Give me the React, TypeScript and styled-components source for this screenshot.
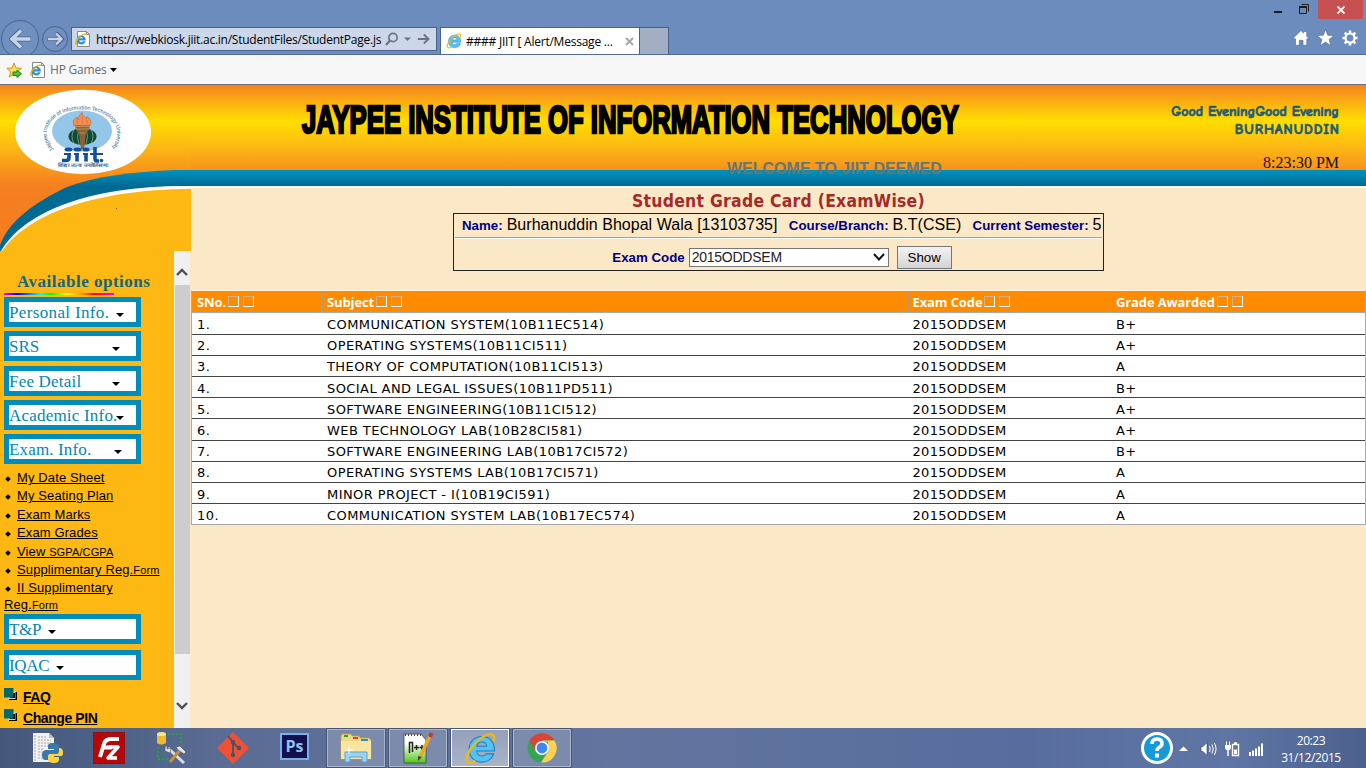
import React from "react";
import styled, { createGlobalStyle, css } from "styled-components";

const GlobalStyle = createGlobalStyle`
  * { box-sizing: border-box; }
  body { margin: 0; overflow: hidden; background: #fbe8c6; font-family: "Liberation Sans", Arial, sans-serif; color: #000; }
`;

const uiFont = `"Open Sans", "Noto Sans", sans-serif`;

const Screen = styled.div`
  width: 1366px;
  height: 768px;
  display: flex;
  flex-direction: column;
  overflow: hidden;
`;

/* ---------- browser frame ---------- */
const Frame = styled.header`
  height: 55px;
  flex: none;
  display: flex;
  align-items: flex-start;
  background: #6b8cbd;
  border-bottom: 1px solid #4f6b96;
`;
const NavButtons = styled.svg`
  flex: none;
  width: 71px;
  height: 54px;
  display: block;
`;
const AddressBar = styled.div`
  width: 366px;
  height: 24px;
  margin-top: 27px;
  padding: 0 6px 0 3px;
  display: flex;
  align-items: center;
  background: #ccd7ea;
  border: 1px solid #48628c;
  font: 12px/22px ${uiFont};
`;
const Url = styled.span`
  margin: 2px 0 0 5px;
  width: 287px;
  white-space: nowrap;
  letter-spacing: -0.25px;
`;
const Tab = styled.div`
  width: 200px;
  height: 27px;
  margin: 27px 0 0 3px;
  padding: 0 5px;
  display: flex;
  align-items: center;
  background: #fff;
  border: 1px solid #48628c;
  border-bottom: 0;
  font: 12px/26px ${uiFont};
`;
const TabTitle = styled.span`
  flex: 1;
  margin: 2px 0 0 4px;
  white-space: nowrap;
  letter-spacing: -0.23px;
`;
const NewTab = styled.div`
  width: 29px;
  height: 27px;
  margin-top: 27px;
  background: #a1aec3;
  border: 1px solid #48628c;
  border-width: 1px 1px 0 0;
`;
const WindowSide = styled.div`
  margin-left: auto;
  display: flex;
  flex-direction: column;
  align-items: flex-end;
`;
const WindowControls = styled.div`
  height: 19px;
  display: flex;
  margin-right: 3px;
`;
const CloseButton = styled.div`
  width: 45px;
  height: 19px;
  background: #c75050;
  display: flex;
  align-items: center;
  justify-content: center;
`;
const FavoritesBar = styled.div`
  height: 30px;
  flex: none;
  display: flex;
  align-items: center;
  gap: 3px;
  padding-left: 6px;
  background: #f7f7f7;
  border-bottom: 1px solid #6d6d72;
  font: 12px/28px ${uiFont};
  color: #6a6a6a;
`;
const FavIcon = styled.svg`
  width: 17px;
  height: 17px;
  margin: 2px 4px 0 0;
`;
const FavLabel = styled.span`
  margin: 1px 0 0 1px;
  letter-spacing: -0.2px;
`;

/* ---------- banner ---------- */
const Banner = styled.div`
  position: relative;
  height: 103px;
  flex: none;
  display: flex;
  padding-left: 191px;
  background: linear-gradient(#f58220 0, #ffde00 36px, #fcb814 62px, #f7901e 85px, #0093c0 85px, #006a93 101px, #fff 101px);
`;
const BannerArt = styled.svg`
  position: absolute;
  left: 0;
  top: 0;
  width: 191px;
  height: 166px;
`;
const BannerCenter = styled.div`
  width: 840px;
  padding-left: 111px;
`;
const Institute = styled.h1`
  margin: 11px 0 0;
  font: bold 38px/48px "Liberation Sans", Arial, sans-serif;
  white-space: nowrap;
  transform: scaleX(0.676);
  transform-origin: 0 50%;
  -webkit-text-stroke: 2.6px #000;
`;
const Welcome = styled.div`
  margin: 16px 0 0 425px;
  font: bold 16px/18px "Liberation Sans", Arial, sans-serif;
  color: #647772;
  white-space: nowrap;
`;
const Greeting = styled.div`
  margin-left: auto;
  padding: 18px 27px 0 0;
  text-align: right;
  font: bold 14px/18px "Comic Sans MS", "Comic Neue", "DejaVu Sans", sans-serif;
  color: #1d5c76;
  white-space: nowrap;
`;
const Salute = styled.div`
  -webkit-text-stroke: 0.7px #1d5c76;
`;
const Student = styled(Salute)`
  letter-spacing: 1px;
  margin-right: -1px;
`;
const Clock = styled.div`
  margin-top: 14px;
  font: 16px/20px "Liberation Serif", "Times New Roman", serif;
  color: #111;
`;

/* ---------- body ---------- */
const Body = styled.div`
  flex: 1;
  min-height: 0;
  display: grid;
  grid-template-columns: 191px 1fr;
`;
const Sidebar = styled.aside`
  min-height: 0;
  display: grid;
  padding-top: 63px;
  grid-template-columns: 174px 17px;
  background: #fdb813;
`;
const Menu = styled.nav`
  min-height: 0;
  overflow: hidden;
  padding: 21px 0 0 4px;
`;
const MenuHeading = styled.div`
  padding-left: 13px;
  height: 21px;
  font: bold 17px/20px "Liberation Serif", Georgia, serif;
  color: #116680;
  letter-spacing: 0.5px;
  white-space: nowrap;
`;
const Rainbow = styled.div`
  width: 110px;
  height: 2px;
  margin-bottom: 2px;
  background: linear-gradient(90deg, #f0f, #00f 12%, #0ff 33%, #0f0 43%, #ff0 58%, #f80 72%, #f00 82%, #f0f);
`;
const MenuGroup = styled.div<{ $gap?: number }>`
  display: flex;
  flex-direction: column;
  gap: ${(p) => p.$gap ?? 4.25}px;
`;
const MenuBox = styled.div<{ $space?: number }>`
  width: 137px;
  height: 30px;
  flex: none;
  padding: 2px 0 0 0;
  display: flex;
  align-items: center;
  background: #fff;
  border: 5px solid #008dbb;
  font: 17px/20px "Liberation Serif", Georgia, serif;
  color: #0088b4;
  white-space: nowrap;
  letter-spacing: ${(p) => p.$space ?? 0}px;
`;
const Caret = styled.i<{ $gap: number }>`
  width: 0;
  height: 0;
  margin: 4px 0 0 ${(p) => p.$gap}px;
  border: 4px solid transparent;
  border-top-color: #000;
  border-bottom: 0;
`;
const Links = styled.ul`
  margin: 5px 0 2px;
  padding: 0;
  list-style: none;
  font-size: 13px;
  line-height: 18.4px;
  letter-spacing: 0.12px;
  small { font-size: 11px; }
`;
const LinkItem = styled.li`
  white-space: nowrap;
  &::before {
    content: "";
    display: inline-block;
    width: 4px;
    height: 4px;
    margin: 0 7px 1px 2px;
    transform: rotate(45deg);
    background: #000;
  }
`;
const Anchor = styled.span`
  text-decoration: underline;
`;
const Wrapped = styled.div`
  line-height: 14px;
`;
const Extras = styled.div`
  padding-top: 7px;
`;
const ExtraLink = styled.div`
  height: 21px;
  display: flex;
  align-items: center;
  gap: 6px;
  font: bold 14px/21px "Liberation Sans", Arial, sans-serif;
  letter-spacing: -0.42px;
  svg { margin-bottom: 5px; }
`;
const Scrollbar = styled.div`
  display: grid;
  grid-template-rows: 34px 369px 1fr;
  background: #f0f0f0;
  border-right: 1px solid #fbe8c6;
`;
const Arrow = styled.svg<{ $top: number }>`
  display: block;
  width: 12px;
  height: 8px;
  margin: ${(p) => p.$top}px auto 0;
`;
const Thumb = styled.div`
  margin-left: 1px;
  background: #cdcdcd;
`;
const Content = styled.main`
  background: #fbe8c6;
  padding-top: 2px;
  display: flex;
  flex-direction: column;
  align-items: center;
`;
const Title = styled.h2`
  margin: 0;
  height: 23px;
  font: bold 17.4px/22px "DejaVu Sans Condensed", "DejaVu Sans", sans-serif;
  letter-spacing: 0.27px;
  color: #a52a2a;
  white-space: nowrap;
`;
const Form = styled.section`
  width: 651px;
  height: 58px;
  border: 1px solid #222;
  padding: 0 1px;
`;
const Facts = styled.div`
  height: 23px;
  padding-left: 7px;
  display: flex;
  align-items: baseline;
  font-size: 16px;
  line-height: 22px;
  white-space: nowrap;
`;
const Label = styled.b`
  color: #000080;
  font-size: 13.3px;
  margin-right: 4px;
`;
const Value = styled.span`
  margin-right: 11.3px;
  letter-spacing: 0.03px;
`;
const Rule = styled.div`
  height: 2px;
  border-top: 1px solid #a0a0a0;
  border-bottom: 1px solid #fff;
`;
const Controls = styled.div`
  padding: 7px 0 0 7px;
  display: flex;
  justify-content: center;
  align-items: center;
`;
const Select = styled.div`
  width: 200px;
  height: 19px;
  display: flex;
  align-items: center;
  justify-content: space-between;
  padding: 0 2px;
  background: #fff;
  border: 1px solid #777;
  font-size: 14px;
  line-height: 17px;
  letter-spacing: -0.25px;
  color: #222;
`;
const Show = styled.div`
  width: 55px;
  height: 23px;
  margin-left: 8px;
  text-align: center;
  font-size: 13.3px;
  line-height: 21px;
  background: linear-gradient(#f2f2f2, #d4d4d4);
  border: 1px solid #777;
`;
const Table = styled.div`
  width: 100%;
  height: 235px;
  margin-top: 19px;
  border: 1px solid #aaa;
  border-top-color: #fff3dc;
  background: #fff;
`;
const columns = css`
  display: grid;
  grid-template-columns: 130px 585.5px 203.5px 1fr;
  align-items: center;
`;
const HeadRow = styled.div`
  ${columns};
  height: 22px;
  background: #ff8c00;
  border-bottom: 1px solid #aaa;
  color: #fff;
  font: bold 13px/21px ${uiFont};
`;
const HeadCell = styled.div`
  height: 21px;
  display: flex;
  align-items: center;
  padding: 1px 0 0 5px;
  white-space: nowrap;
  letter-spacing: -0.12px;
  span { margin-right: 2px; }
  & + & { border-left: 1px solid #b59a72; padding-left: 4px; }
`;
const SortBox = styled.i`
  width: 11px;
  height: 11px;
  margin: 0 4px 1px 0;
  border: 1px solid #fff;
  border-top-color: #c9b18c;
  border-left-color: #c9b18c;
`;
const Row = styled.div`
  ${columns};
  height: 21.2px;
  border-bottom: 1px solid #444;
  font: 13px/20px "DejaVu Sans", Verdana, sans-serif;
  &:nth-child(2) { height: 21.6px; }
  &:last-child { height: 20px; border-bottom: 0; }
`;
const Cell = styled.div`
  padding: 1.6px 0 0 5px;
  white-space: nowrap;
  letter-spacing: 0.42px;
  &:nth-child(3) { letter-spacing: 0.3px; }
`;

/* ---------- taskbar ---------- */
const Taskbar = styled.footer`
  height: 40px;
  flex: none;
  display: flex;
  align-items: center;
  padding-left: 16px;
  background: linear-gradient(90deg, #45577a, #50648a 10%, #5b6c94 16%, #62759f 45%, #586d9d 75%, #5f76a5 90%, #4c608d);
`;
const Pinned = styled.div`
  display: flex;
  padding-right: 1px;
`;
const TaskItem = styled.div<{ $state?: "open" | "active" }>`
  width: ${(p) => (p.$state ? 58 : 62)}px;
  height: 38px;
  margin-right: ${(p) => (p.$state ? 4 : 0)}px;
  display: flex;
  align-items: center;
  justify-content: center;
  ${(p) =>
    p.$state &&
    css`
      background: ${p.$state === "active" ? "linear-gradient(#95a1bb, #a9b3c9)" : "#7c8bab"};
      border: 1px solid ${p.$state === "active" ? "#fff" : "#a9b5cb"};
      outline: 1px solid #455676;
    `}
`;
const Tray = styled.div`
  margin-left: auto;
  width: 226px;
  height: 40px;
  display: flex;
  align-items: center;
`;
const DateTime = styled.div`
  width: 90px;
  padding-top: 1px;
  text-align: center;
  color: #fff;
  font: 12px/17px ${uiFont};
  letter-spacing: -0.4px;
`;

const IeLogo = ({ size }: { size: number }) => (
  <svg width={size} height={size} viewBox="0 0 32 32">
    <path d="M29.500 18.500H12.300c.2 3 2.200 4.800 5 4.800 2 0 3.500-.8 4.200-2.100h7.300c-1.400 4.800-6 8-11.500 8-7.300 0-12.300-5-12.300-12.200S10 4.300 17.300 4.300c7.600 0 12.500 5.400 12.200 14.200zM12.400 13.800h9.600c-.3-2.500-2.100-4.100-4.700-4.100s-4.500 1.600-4.900 4.100z" fill="#55c3f2" stroke="#1c7fc0" strokeWidth="1" />
    <path d="M28.500 9c1.300-3.500.8-6-1.500-6.700C22.500.8 12.500 7.500 6.500 16.500c-5 7.500-5.600 12.900-1.500 13.300 2 .2 4-.5 6-2" fill="none" stroke="#f2b90c" strokeWidth="2.300" />
  </svg>
);

const PageIcon = () => (
  <svg width="16" height="16" viewBox="0 0 16 16">
    <path d="M2.500.5h9l3 3v12h-12z" fill="#fff" stroke="#888" />
    <path d="M11.500.5v3h3" fill="none" stroke="#888" />
    <path d="M10.500 9.200H4c.3 2.400 3.200 2.800 4 1.200h2.300c-1 4.300-8.300 3.500-8.300-1.500 0-5.800 8.700-5.800 8.500.3zM4.200 7.500h4C8 5.400 4.600 5.400 4.200 7.500z" fill="#2a8fd8" stroke="#2a8fd8" strokeWidth=".5" />
    <path d="M11 4C10.500 2 6 3.500 3 7.500S.3 13.500 2.300 13" fill="none" stroke="#e8b011" strokeWidth="1.300" />
  </svg>
);

const Emblem = () => (
  <g>
    <ellipse cx="83" cy="47" rx="68" ry="42.300" fill="#fff" />
    <ellipse cx="82" cy="46" rx="30" ry="20.500" fill="#94c6e8" />
    <path id="ring" d="M54 64.500C37 47 51 24.500 82 24.500S127 47 110 64.500" fill="none" />
    <text fontSize="5.600" fill="#2d6482" fontFamily="Liberation Sans" textLength="128">
      <textPath href="#ring" textLength="128">Jaypee Institute of Information Technology University</textPath>
    </text>
    <ellipse cx="82.500" cy="51.500" rx="14" ry="8.500" fill="#124b35" />
    <path d="M74 44.500q-4 7 0 14M79 43.500q-3 8 0 16M86 43.500q3 8 0 16M91 44.500q4 7 0 14" fill="none" stroke="#8fb9a5" strokeWidth=".7" />
    <path d="M75 40h15l-1 5-3 3-2 16h-3l-2-16-3-3z" fill="#8b6337" />
    <path d="M75 41.500h15M76 44h13M80 48h5" stroke="#d3a56b" strokeWidth=".7" />
    <path d="M74 40.500c-2-4 0-7 3-8 0 2 1 2 1 2 0-3 2-5 4-7 0 3 3 4 4 6l1-2c4 3 5 6 3 9z" fill="#f58f55" stroke="#9f5635" strokeWidth=".5" />
    <path d="M77 39q0-3 2-5M82 39q2-4 0-8M87 39q1-3-1-5" fill="none" stroke="#c96437" strokeWidth=".6" />
    <g fill="none" stroke="#124f9f" strokeWidth="3.600">
      <path d="M62 75.500h4q3 0 3-3v-4M77 68.500v8M86 68.500v8M95 62v11.500q0 2.500 3 2.500h1" />
      <path d="M64 69h7M74 69h5M83 69h5M90 69h13" strokeWidth="1.800" />
    </g>
    <g fill="#124f9f">
      <ellipse cx="68.500" cy="64.500" rx="4" ry="2" />
      <ellipse cx="77.500" cy="64.500" rx="4" ry="2" />
      <ellipse cx="86" cy="64.500" rx="3.500" ry="2" />
      <circle cx="101.500" cy="75.500" r="1.800" />
    </g>
    <text x="58" y="82" fontSize="5" fontWeight="bold" fill="#356e8c" textLength="50" lengthAdjust="spacingAndGlyphs">विद्या तत्व ज्योतिसमः</text>
  </g>
);

const menus: [string, number, number][] = [
  ["Personal Info.", 0.35, 7],
  ["SRS", 0, 73],
  ["Fee Detail", 0.2, 30.5],
  ["Academic Info.", 0.2, -2],
  ["Exam. Info.", 0.15, 23],
];
const links: [string, string?][] = [
  ["My Date Sheet"],
  ["My Seating Plan"],
  ["Exam Marks"],
  ["Exam Grades"],
  ["View ", "SGPA/CGPA"],
  ["Supplimentary Reg.", "Form"],
];
const grades = [
  ["COMMUNICATION SYSTEM(10B11EC514)", "B+"],
  ["OPERATING SYSTEMS(10B11CI511)", "A+"],
  ["THEORY OF COMPUTATION(10B11CI513)", "A"],
  ["SOCIAL AND LEGAL ISSUES(10B11PD511)", "B+"],
  ["SOFTWARE ENGINEERING(10B11CI512)", "A+"],
  ["WEB TECHNOLOGY LAB(10B28CI581)", "A+"],
  ["SOFTWARE ENGINEERING LAB(10B17CI572)", "B+"],
  ["OPERATING SYSTEMS LAB(10B17CI571)", "A"],
  ["MINOR PROJECT - I(10B19CI591)", "A"],
  ["COMMUNICATION SYSTEM LAB(10B17EC574)", "A"],
];

const Squares = () => (
  <svg width="13" height="13" viewBox="0 0 13 13">
    <path d="M5 4h8v8H5z" fill="#000" />
    <path d="M4 3h7.500v8H4z" fill="#cfd8c8" />
    <path d="M6 5h5v5H6z" fill="#000" />
    <path d="M0 0h9.500v9.500H0z" fill="#006b68" />
  </svg>
);

export default function App() {
  return (
    <Screen>
      <GlobalStyle />
      <Frame>
        <NavButtons viewBox="0 0 71 54">
          <g fill="#7090c0" stroke="#48628c">
            <circle cx="20" cy="39" r="18.500" />
            <circle cx="55" cy="39" r="12.500" />
          </g>
          <g fill="none" stroke="#48628c" strokeWidth="5">
            <path d="M31 39H12M21 30l-9 9 9 9" />
            <path d="M47.500 39h13M56 33l6 6-6 6" strokeWidth="4" />
          </g>
          <g fill="none" stroke="#c6d3e8">
            <path d="M30.500 39H12M21 30.500L12 39l9 8.500" strokeWidth="3.500" />
            <path d="M48 39h13M56 33.500l5.500 5.500-5.500 5.500" strokeWidth="2.400" />
          </g>
        </NavButtons>
        <AddressBar>
          <PageIcon />
          <Url>https://webkiosk.jiit.ac.in/StudentFiles/StudentPage.js</Url>
          <svg width="48" height="16" viewBox="0 0 48 16" fill="none" stroke="#6c7480">
            <circle cx="11" cy="6.500" r="4.200" strokeWidth="1.700" />
            <path d="M8 9.500l-4 4.500" strokeWidth="2.200" />
            <path d="M22 6.500h7l-3.500 3.500z" fill="#6c7480" stroke="none" />
            <path d="M36 8h10M42 3.500L46.500 8 42 12.500" strokeWidth="2" />
          </svg>
        </AddressBar>
        <Tab>
          <IeLogo size={16} />
          <TabTitle>#### JIIT [ Alert/Message ...</TabTitle>
          <svg width="9" height="9" viewBox="0 0 9 9">
            <path d="M1 1l7 7M8 1L1 8" stroke="#a6a6a6" strokeWidth="2" />
          </svg>
        </Tab>
        <NewTab />
        <WindowSide>
          <WindowControls>
            <svg width="48" height="19" viewBox="0 0 48 19">
              <path d="M4 11h8v2H4z" fill="#1e1e1e" />
              <path d="M29.500 6.500h7v7h-7zM31.500 4.500h7v7" fill="none" stroke="#1e1e1e" />
              <path d="M29 6h8v2h-8z" fill="#1e1e1e" />
            </svg>
            <CloseButton>
              <svg width="8" height="8" viewBox="0 0 8 8">
                <path d="M.5.5l7 7M7.500.5l-7 7" stroke="#fff" strokeWidth="1.800" />
              </svg>
            </CloseButton>
          </WindowControls>
          <svg width="76" height="35" viewBox="0 0 76 35">
            <g fill="#fff" stroke="#4d6790" strokeWidth=".6">
              <path d="M11 11.500l2.700 2.700V12.500h3v4.700l2.600 2.600h-2.500v6.500h-3.800v-5H9.300v5H5.500v-6.500H2.700z" />
              <path d="M35.500 10.500l2.200 5.800 6.400.2-5 3.900 1.800 6.300-5.400-3.600-5.400 3.600 1.800-6.300-5-3.900 6.400-.2z" />
            </g>
            <circle cx="60" cy="19" r="4.500" fill="none" stroke="#fff" strokeWidth="2.200" />
            <g stroke="#fff" strokeWidth="2.600">
              <path d="M60 11.500v3M60 23.500v3M52.500 19h3M64.500 19h3M54.700 13.700l2 2M63.300 22.300l2 2M65.300 13.700l-2 2M56.700 22.300l-2 2" />
            </g>
          </svg>
        </WindowSide>
      </Frame>
      <FavoritesBar>
        <FavIcon viewBox="0 0 17 17">
          <path d="M8 1l2 5 5.500.3-4.300 3.500 1.500 5.200L8 12l-4.700 3 1.500-5.200L.8 6.300 6 6z" fill="#ffdc5e" stroke="#c99a1b" />
          <path d="M7 10h4V8l4.500 3.800L11 15.500v-2H7z" fill="#4fc62d" stroke="#16851a" />
        </FavIcon>
        <PageIcon />
        <FavLabel>HP Games</FavLabel>
        <svg width="7" height="4" viewBox="0 0 7 4"><path d="M0 0h7L3.500 4z" /></svg>
      </FavoritesBar>

      <Banner>
        <BannerCenter>
          <Institute>JAYPEE INSTITUTE OF INFORMATION TECHNOLOGY</Institute>
          <Welcome>WELCOME TO JIIT DEEMED</Welcome>
        </BannerCenter>
        <Greeting>
          <Salute>Good EveningGood Evening</Salute>
          <Student>BURHANUDDIN</Student>
          <Clock>8:23:30 PM</Clock>
        </Greeting>
        <BannerArt viewBox="0 0 191 166">
          <defs>
            <linearGradient id="sky" x1="0" y1="0" x2="0" y2="1">
              <stop offset="0" stopColor="#f58220" />
              <stop offset=".217" stopColor="#ffde00" />
              <stop offset=".373" stopColor="#fcb814" />
              <stop offset=".6" stopColor="#f58020" />
              <stop offset="1" stopColor="#f47b20" />
            </linearGradient>
            <linearGradient id="sea" x1="0" y1="85" x2="0" y2="104" gradientUnits="userSpaceOnUse">
              <stop offset="0" stopColor="#0093c0" />
              <stop offset=".85" stopColor="#006a93" />
            </linearGradient>
          </defs>
          <path d="M0 0h191v166H0z" fill="url(#sky)" />
          <path d="M0 166V160C8 138 31 119 67 102 96 91 132 87 175 85h16v81z" fill="url(#sea)" />
          <path d="M1 166C22 130 80 103 175 101h16v65z" fill="#fff" />
          <path d="M2 166C27 131 88 105 191 103.800V166z" fill="#fdb813" />
          <circle cx="116.500" cy="123.500" r=".6" fill="#6b4a10" />
          <Emblem />
        </BannerArt>
      </Banner>

      <Body>
        <Sidebar>
          <Menu>
            <MenuHeading>Available options</MenuHeading>
            <Rainbow />
            <MenuGroup>
              {menus.map(([label, space, gap]) => (
                <MenuBox key={label} $space={space}>
                  {label}
                  <Caret $gap={gap} />
                </MenuBox>
              ))}
            </MenuGroup>
            <Links>
              {links.map(([text, small]) => (
                <LinkItem key={text}>
                  <Anchor>
                    {text}
                    {small && <small>{small}</small>}
                  </Anchor>
                </LinkItem>
              ))}
              <LinkItem>
                <Anchor>II Supplimentary</Anchor>
                <Wrapped>
                  <Anchor>
                    Reg.<small>Form</small>
                  </Anchor>
                </Wrapped>
              </LinkItem>
            </Links>
            <MenuGroup $gap={6}>
              <MenuBox $space={-0.3}>
                T&amp;P
                <Caret $gap={7} />
              </MenuBox>
              <MenuBox $space={-0.3}>
                IQAC
                <Caret $gap={7} />
              </MenuBox>
            </MenuGroup>
            <Extras>
              <ExtraLink><Squares /><Anchor>FAQ</Anchor></ExtraLink>
              <ExtraLink><Squares /><Anchor>Change PIN</Anchor></ExtraLink>
            </Extras>
          </Menu>
          <Scrollbar>
            <Arrow $top={17} viewBox="0 0 12 8"><path d="M1 7l5-5 5 5" fill="none" stroke="#505050" strokeWidth="2.400" /></Arrow>
            <Thumb />
            <Arrow $top={48} viewBox="0 0 12 8"><path d="M1 1l5 5 5-5" fill="none" stroke="#505050" strokeWidth="2.400" /></Arrow>
          </Scrollbar>
        </Sidebar>

        <Content>
          <Title>Student Grade Card (ExamWise)</Title>
          <Form>
            <Facts>
              <Label>Name:</Label>
              <Value>Burhanuddin Bhopal Wala [13103735]</Value>
              <Label>Course/Branch:</Label>
              <Value>B.T(CSE)</Value>
              <Label>Current Semester:</Label>
              <span>5</span>
            </Facts>
            <Rule />
            <Controls>
              <Label>Exam Code</Label>
              <Select>
                2015ODDSEM
                <svg width="14" height="9" viewBox="0 0 14 9"><path d="M2 1l5 5.500L12 1" fill="none" stroke="#111" strokeWidth="2" /></svg>
              </Select>
              <Show>Show</Show>
            </Controls>
          </Form>
          <Table>
            <HeadRow>
              {["SNo.", "Subject", "Exam Code", "Grade Awarded"].map((h) => (
                <HeadCell key={h}>
                  <span>{h}</span>
                  <SortBox />
                  <SortBox />
                </HeadCell>
              ))}
            </HeadRow>
            {grades.map(([subject, grade], i) => (
              <Row key={subject}>
                <Cell>{i + 1}.</Cell>
                <Cell>{subject}</Cell>
                <Cell>2015ODDSEM</Cell>
                <Cell>{grade}</Cell>
              </Row>
            ))}
          </Table>
        </Content>
      </Body>

      <Taskbar>
        <Pinned>
          <TaskItem>
            <svg width="32" height="32" viewBox="0 0 32 32">
              <path d="M2 1h16l5 5v24H2z" fill="#f1f1f1" />
              <path d="M18 1v5h5z" fill="#bbb" />
              <path d="M4 3v26M7 5h9M7 8h13M7 11h13M7 14h10M7 17h6M7 20h5M7 23h5M7 26h5" stroke="#aaa" strokeDasharray="2 1" />
              <path d="M22 11c-4 0-5 1-5 3v3h6v1h-8c-3 0-4 3-4 5s1 5 3 5h3v-3c0-2 1-3 3-3h5c2 0 3-1 3-3v-5c0-2-2-3-6-3z" fill="#3c78a9" />
              <path d="M28 16v3c0 2-1 3-3 3h-5c-2 0-3 1-3 3v3c0 2 3 3 6 3s5-1 5-3v-3h-5v-1h7c2 0 2-2 2-4s-1-4-4-4z" fill="#fcd33f" />
            </svg>
          </TaskItem>
          <TaskItem>
            <svg width="32" height="32" viewBox="0 0 32 32">
              <path d="M.5.500h31v31H.5z" fill="#b60808" stroke="#8b0000" strokeDasharray="2 1" />
              <path d="M7 25l4-13q1.500-5 7-5h8M9 15.500h10" fill="none" stroke="#fff" strokeWidth="4" />
              <path d="M16 15h9L15 26h9" fill="none" stroke="#fff" strokeWidth="3.500" strokeLinejoin="round" />
            </svg>
          </TaskItem>
          <TaskItem>
            <svg width="32" height="34" viewBox="0 0 32 34">
              <path d="M13 3h13v11M3 16v12h10" fill="none" stroke="#2aa336" strokeWidth="2" strokeDasharray="2 2" />
              <path d="M2 3v9q4 3 9 0V3z" fill="#eebb30" />
              <ellipse cx="6.500" cy="3" rx="4.500" ry="2" fill="#ffe58a" />
              <path d="M13 17l16 15" stroke="#d8dde2" strokeWidth="3" />
              <path d="M25 19L15 31" stroke="#c98e37" strokeWidth="3" />
              <path d="M21 16l4-1 6 6-2 2-6-4zM10 16l2-2v4l4-1-1 5-5-2z" fill="#dfe3e7" stroke="#4a4f58" strokeWidth=".6" />
            </svg>
          </TaskItem>
          <TaskItem>
            <svg width="34" height="34" viewBox="0 0 34 34">
              <path d="M17 1l16 16-16 16L1 17z" fill="#ee5133" />
              <path d="M12 5l5 6v14M17 12l6 5" fill="none" stroke="#4b5268" strokeWidth="1.800" />
              <g fill="#4b5268"><circle cx="17" cy="11" r="2.200" /><circle cx="23" cy="17" r="2.200" /><circle cx="17" cy="24" r="2.200" /></g>
            </svg>
          </TaskItem>
          <TaskItem>
            <svg width="30" height="30" viewBox="0 0 30 30">
              <path d="M1 1h27v25H1z" fill="#14104c" stroke="#74b0ea" strokeWidth="2" />
              <text x="5.500" y="19" fontSize="16" fontWeight="bold" fill="#8dc3f5" fontFamily="Open Sans" textLength="18" lengthAdjust="spacingAndGlyphs">Ps</text>
            </svg>
          </TaskItem>
        </Pinned>
        <TaskItem $state="open">
          <svg width="34" height="32" viewBox="0 0 34 32">
            <path d="M2 4l1-2h9l1 2h7l1 2h9l2 2v19H2z" fill="#f3d982" stroke="#c2a03f" strokeWidth=".8" />
            <path d="M5 3h4v2H5z" fill="#1da83a" /><path d="M14 5h5v2h-5z" fill="#d8433a" /><path d="M22 7h7v2h-7z" fill="#2d8fe0" />
            <path d="M2 9h30v18H2z" fill="#f8e5a2" />
            <path d="M6 30V20h22v10h-5v-5H11v5z" fill="#9bd3ee" stroke="#58a6cf" />
            <path d="M10 14v8M6 18h8" stroke="#fff" />
          </svg>
        </TaskItem>
        <TaskItem $state="open">
          <svg width="32" height="33" viewBox="0 0 32 33">
            <defs>
              <linearGradient id="note" x1="0" y1="0" x2="0" y2="1">
                <stop offset=".3" stopColor="#fff" />
                <stop offset="1" stopColor="#52c814" />
              </linearGradient>
            </defs>
            <path d="M2 2h17l5 6v23H2z" fill="url(#note)" stroke="#444" strokeWidth=".8" />
            <path d="M3 3h16" stroke="#444" strokeWidth="2" strokeDasharray="1 2" />
            <path d="M7.500 21V10M7 10.500h3.500V20M12 15.500h5M14.500 13v5M17.500 15.500h5M20 13v5" fill="none" stroke="#222" strokeWidth="1.500" />
            <path d="M28 4L18 25" stroke="#e9a724" strokeWidth="3.500" />
            <path d="M29.500 1l-1.500 4" stroke="#bf3b31" strokeWidth="4" />
            <path d="M16 24l4 1-4 4z" fill="#444" />
          </svg>
        </TaskItem>
        <TaskItem $state="active"><IeLogo size={33} /></TaskItem>
        <TaskItem $state="open">
          <svg width="30" height="30" viewBox="0 0 30 30">
            <circle cx="15" cy="15" r="14.500" fill="#35a457" />
            <path d="M2.500 7.500a14.500 14.500 0 0125 0H15v7L8.500 18z" fill="#da4437" />
            <path d="M27.500 7.500A14.500 14.500 0 0114 29.500L21.500 18 21 9l-6-1.500z" fill="#fcd151" />
            <circle cx="15" cy="15" r="7" fill="#fff" />
            <circle cx="15" cy="15" r="5.400" fill="#4286f5" />
          </svg>
        </TaskItem>
        <Tray>
          <svg width="126" height="40" viewBox="0 0 126 40">
            <circle cx="17" cy="20" r="14.500" fill="#129ad9" stroke="#fff" strokeWidth="3" />
            <path d="M12 16q0-5 5-5t5 4.500q0 2.500-3 4-2 1-2 3.500" fill="none" stroke="#fff" strokeWidth="3.600" />
            <path d="M15 25.500h4v4h-4z" fill="#fff" />
            <path d="M39 23l4.500-4.500L48 23z" fill="#fff" />
            <path d="M61 18.500h2l4-4v13l-4-4h-2z" fill="#fff" stroke="#2a3653" strokeWidth=".6" />
            <path d="M69.500 18q1.500 3 0 6M72 16.500q2.500 4.500 0 9M74.300 15q3.500 6 0 12" fill="none" stroke="#fff" />
            <path d="M86.500 13.500v4M89.500 13.500v4" stroke="#fff" />
            <path d="M85 17h6v3l-1 2h-4l-1-2z" fill="#fff" />
            <path d="M88 22v6" stroke="#fff" strokeWidth="1.500" />
            <path d="M92.500 16.500h6v11h-6zM94 15h3" fill="none" stroke="#fff" strokeWidth="1.400" />
            <path d="M94 21.500h3v4.500h-3z" fill="#fff" />
            <path d="M109 24h2v4h-2zM112 22.500h2V28h-2zM115 20.500h2V28h-2zM118 18.500h2V28h-2zM121 15.500h2V28h-2z" fill="#fff" />
          </svg>
          <DateTime>
            <div>20:23</div>
            <div>31/12/2015</div>
          </DateTime>
        </Tray>
      </Taskbar>
    </Screen>
  );
}
